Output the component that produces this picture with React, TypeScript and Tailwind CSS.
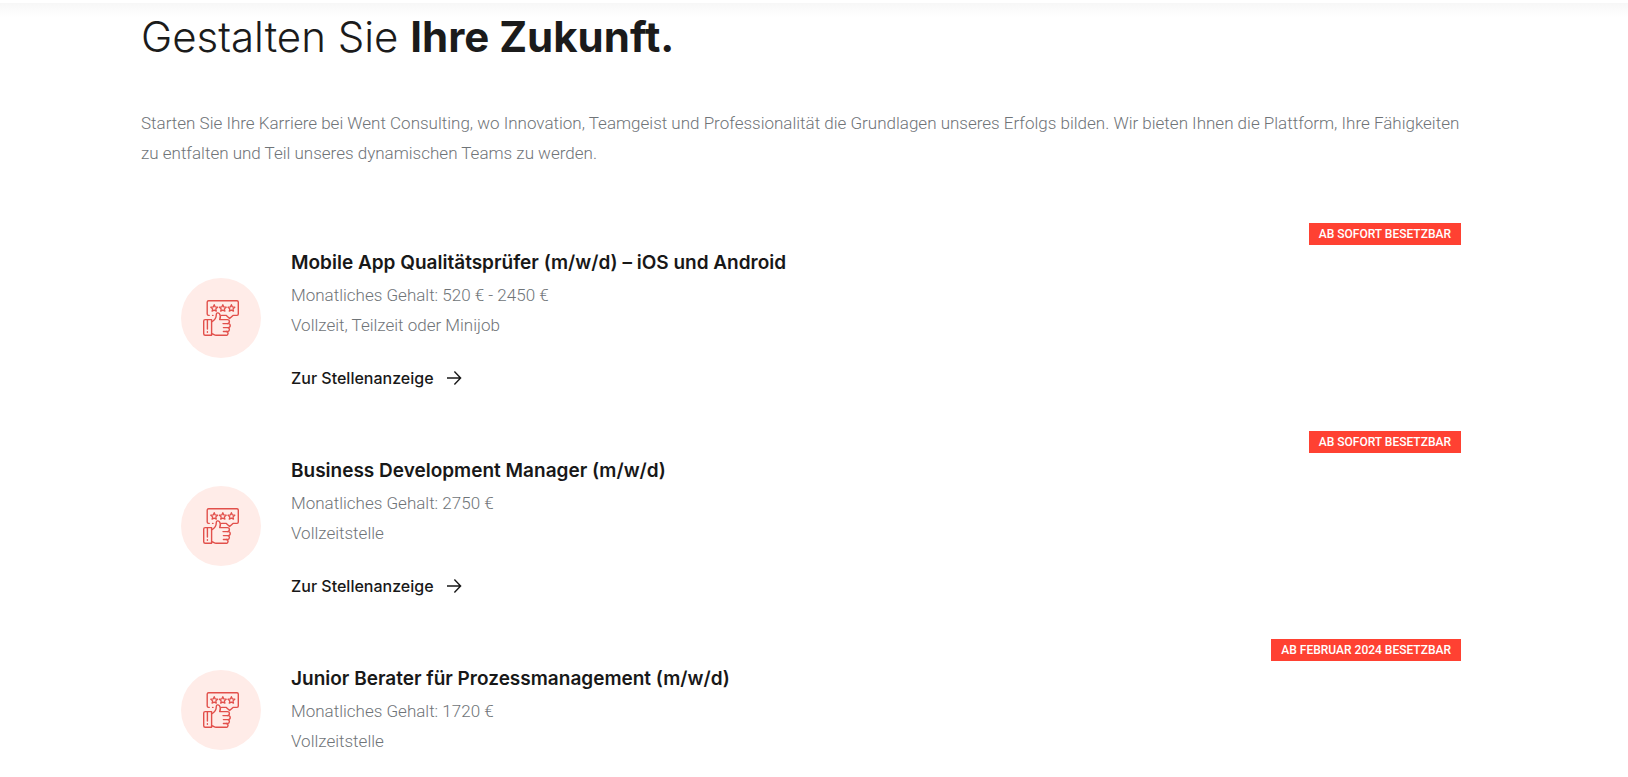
import React from 'react';

interface Job {
  id: string;
  title: string;
  salary: string;
  type: string;
  badge: string;
  href?: string;
}

const JOBS: Job[] = [
  {
    id: 'app-tester',
    title: 'Mobile App Qualitätsprüfer (m/w/d) – iOS und Android',
    salary: '520 € - 2450 €',
    type: 'Vollzeit, Teilzeit oder Minijob',
    badge: 'AB SOFORT BESETZBAR',
    href: '#app-tester',
  },
  {
    id: 'business-development',
    title: 'Business Development Manager (m/w/d)',
    salary: '2750 €',
    type: 'Vollzeitstelle',
    badge: 'AB SOFORT BESETZBAR',
    href: '#business-development',
  },
  {
    id: 'junior-berater',
    title: 'Junior Berater für Prozessmanagement (m/w/d)',
    salary: '1720 €',
    type: 'Vollzeitstelle',
    badge: 'AB FEBRUAR 2024 BESETZBAR',
  },
];

const STAR = 'M0 -3.4 L1 -1.2 L3.4 -0.9 L1.6 0.8 L2.1 3 L0 2 L-2.1 3 L-1.6 0.8 L-3.4 -0.9 L-1 -1.2 Z';

function ThumbIcon() {
  return (
    <svg
      className="size-9"
      viewBox="0 0 36 36"
      fill="none"
      stroke="#e2504b"
      strokeWidth="1.4"
      strokeLinecap="round"
      strokeLinejoin="round"
      aria-hidden="true"
    >
      {/* rating bubble */}
      <path d="M6.2 15.4H5.6A1.4 1.4 0 0 1 4.2 14V2A1.4 1.4 0 0 1 5.6 .7H34A1.4 1.4 0 0 1 35.3 2V14A1.4 1.4 0 0 1 34 15.4H30L26.6 18.4L23.3 15.4H18.6" />
      <path d="M9.6 15.4H10" />
      {[11.2, 19.8, 28.4].map((x) => (
        <path key={x} d={STAR} transform={`translate(${x} 8.1)`} strokeWidth="1.3" />
      ))}
      {/* cuff */}
      <path d="M8.6 19.6H2.2A1.5 1.5 0 0 0 .7 21.1V33.8A1.5 1.5 0 0 0 2.2 35.3H8.6Z" />
      <path d="M4.4 20V29M4.4 31.8V32.2" />
      {/* hand */}
      <path d="M8.6 21.8C12 20.4 13.3 17.8 13.3 14.6C13.3 12.7 15.2 12.3 16.4 13.6C18 15.6 17.4 18 16.7 19.6H24.4A2 2 0 0 1 24.4 23.6H20" />
      <path d="M24.4 23.6H25.2A2 2 0 0 1 25.2 27.6H20.4" />
      <path d="M25 27.6A2 2 0 0 1 24.6 31.5H20.4" />
      <path d="M23.4 31.5A1.9 1.9 0 0 1 22.8 35.3H13C11.4 35.3 10.6 34 8.6 33.8" />
    </svg>
  );
}

function ArrowIcon() {
  return (
    <svg className="size-4" viewBox="0 0 16 16" fill="none" stroke="currentColor" strokeWidth="1.4" aria-hidden="true">
      <path d="M1 8H14.4M8.4 1.6L14.6 8L8.4 14.4" />
    </svg>
  );
}

function JobCard({ job }: { job: Job }) {
  return (
    <article className="pb-[41px]">
      <div className="flex justify-end">
        <span className="bg-[#ff4132] px-2.5 font-['Roboto',sans-serif] text-xs leading-[22px] font-medium text-white">
          {job.badge}
        </span>
      </div>
      <div className="flex items-center gap-[30px] pl-10">
        <div className="flex size-20 shrink-0 items-center justify-center rounded-full bg-[#ffece8]">
          <ThumbIcon />
        </div>
        <div>
          <h2 className="pt-[5px] text-[19px] leading-[26px] font-semibold text-[#181818]">{job.title}</h2>
          <p className="pt-1 pb-0.5 font-['Roboto',sans-serif] text-[17px] leading-[30px] font-light text-[#6f7478]">
            Monatliches Gehalt: {job.salary}
            <br />
            {job.type}
          </p>
          {job.href && (
            <a href={job.href} className="mt-6 inline-flex items-center gap-3 leading-6 font-medium text-[#181818]">
              Zur Stellenanzeige
              <ArrowIcon />
            </a>
          )}
        </div>
      </div>
    </article>
  );
}

export default function App() {
  return (
    <div className="bg-white font-['Inter',sans-serif]">
      {/* lower edge of the header with its shadow */}
      <div className="pt-[3px]">
        <div className="h-[14px] bg-linear-to-b from-[#f7f7f7] to-white" />
      </div>
      <main className="pr-[26px]">
        <div className="mx-auto max-w-[1320px]">
          <h1 className="text-[42px] leading-10 font-light text-[#1b1b1b]">
            Gestalten Sie <strong className="font-bold">Ihre Zukunft.</strong>
          </h1>
          <p className="pt-[51px] font-['Roboto',sans-serif] text-[17px] leading-[30px] font-light text-[#6f7478]">
            Starten Sie Ihre Karriere bei Went Consulting, wo Innovation, Teamgeist und Professionalität die Grundlagen
            unseres Erfolgs bilden. Wir bieten Ihnen die Plattform, Ihre Fähigkeiten zu entfalten und Teil unseres
            dynamischen Teams zu werden.
          </p>
          <section className="pt-[55px]">
            {JOBS.map((job) => (
              <JobCard key={job.id} job={job} />
            ))}
          </section>
        </div>
      </main>
    </div>
  );
}
